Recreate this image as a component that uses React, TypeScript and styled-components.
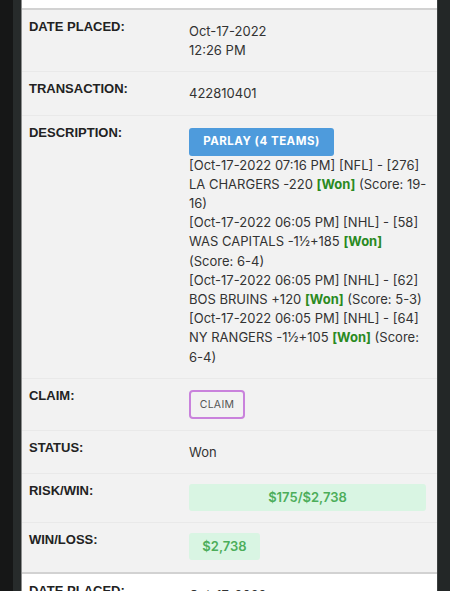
import styled, { createGlobalStyle } from 'styled-components';

const GlobalStyle = createGlobalStyle`
  html, body {
    margin: 0;
    padding: 0;
    height: 100%;
    overflow: hidden;
    background: #161717;
  }
  body {
    font-family: Inter, "Liberation Sans", Arial, sans-serif;
    color: #333;
  }
`;

const Frame = styled.div`
  display: flex;
  height: 591px;
  padding-left: 13px;
  background: #161717;
`;

const Gutter = styled.div`
  width: 8px;
  background: #272b2b;
  border-right: 1px solid #8c8e8e;
`;

const Column = styled.div`
  width: 416px;
  display: flex;
  flex-direction: column;
  overflow: hidden;
`;

const RightEdge = styled.div`
  width: 12px;
  background: #232727;
  border-left: 1px solid #3b3f3f;
`;

const PrevTail = styled.div`
  height: 8px;
  background: #fff;
  flex-shrink: 0;
`;

const Card = styled.div<{ $striped?: boolean }>`
  background: ${p => (p.$striped ? '#f2f2f2' : '#fff')};
  border-top: 2px solid #d2d2d2;
  flex-shrink: 0;
`;

const Row = styled.div<{ $last?: boolean }>`
  display: grid;
  grid-template-columns: 160px 1fr;
  padding: 7px 7px 11px 7px;
  border-bottom: 1px solid ${p => (p.$last ? 'transparent' : '#e9e9e9')};
  font-size: 13px;
  line-height: 19.2px;
`;

const Label = styled.div`
  font-family: "Liberation Sans", Arial, sans-serif;
  font-weight: 700;
  font-size: 13px;
  color: #222;
  text-transform: uppercase;
`;

const Value = styled.div`
  margin-top: 5px;
  color: #333;
`;

const Line = styled.div``;

const BetType = styled.div`
  display: inline-flex;
  align-items: center;
  justify-content: center;
  width: 145px;
  height: 28px;
  border-radius: 3px;
  background: #4e9bdc;
  color: #fff;
  font-weight: 700;
  font-size: 11.5px;
  letter-spacing: 0.5px;
`;

const Won = styled.span`
  color: #2a8a1f;
  font-weight: 700;
`;

const ClaimButton = styled.button`
  width: 56px;
  height: 29px;
  margin-top: -1px;
  border: 2px solid #c982dc;
  border-radius: 4px;
  background: transparent;
  color: #555;
  font-family: inherit;
  font-size: 10.5px;
  letter-spacing: 0.3px;
  padding: 0;
`;

const Money = styled.div<{ $full?: boolean }>`
  display: flex;
  align-items: center;
  justify-content: center;
  width: ${p => (p.$full ? 'calc(100% - 4px)' : '71px')};
  height: 27px;
  border-radius: 3px;
  background: #d9f5e3;
  color: #4cad5a;
  font-weight: 600;
  font-size: 13px;
  margin-top: -2px;
`;

const legs = [
  { head: '[Oct-17-2022 07:16 PM] [NFL] - [276]', pick: 'LA CHARGERS -220', score: '(Score: 19-\u200b16)' },
  { head: '[Oct-17-2022 06:05 PM] [NHL] - [58]', pick: 'WAS CAPITALS -1½+185', score: '(Score: 6-4)' },
  { head: '[Oct-17-2022 06:05 PM] [NHL] - [62]', pick: 'BOS BRUINS +120', score: '(Score: 5-3)' },
  { head: '[Oct-17-2022 06:05 PM] [NHL] - [64]', pick: 'NY RANGERS -1½+105', score: '(Score: 6-4)' },
];

export default function App() {
  return (
    <>
      <GlobalStyle />
      <Frame>
        <Gutter />
        <Column>
          <PrevTail />
          <Card $striped>
            <Row>
              <Label>Date Placed:</Label>
              <Value>
                <Line>Oct-17-2022</Line>
                <Line>12:26 PM</Line>
              </Value>
            </Row>
            <Row>
              <Label>Transaction:</Label>
              <Value>422810401</Value>
            </Row>
            <Row>
              <Label>Description:</Label>
              <Value>
                <BetType>PARLAY (4 TEAMS)</BetType>
                {legs.map(l => (
                  <div key={l.head + l.pick}>
                    <Line>{l.head}</Line>
                    <Line>
                      {l.pick} <Won>[Won]</Won> {l.score}
                    </Line>
                  </div>
                ))}
              </Value>
            </Row>
            <Row>
              <Label>Claim:</Label>
              <Value>
                <ClaimButton>CLAIM</ClaimButton>
              </Value>
            </Row>
            <Row>
              <Label>Status:</Label>
              <Value>Won</Value>
            </Row>
            <Row>
              <Label>Risk/Win:</Label>
              <Value>
                <Money $full>$175/$2,738</Money>
              </Value>
            </Row>
            <Row $last>
              <Label>Win/Loss:</Label>
              <Value>
                <Money>$2,738</Money>
              </Value>
            </Row>
          </Card>
          <Card>
            <Row>
              <Label>Date Placed:</Label>
              <Value>
                <Line>Oct-17-2022</Line>
                <Line>12:26 PM</Line>
              </Value>
            </Row>
          </Card>
        </Column>
        <RightEdge />
      </Frame>
    </>
  );
}
